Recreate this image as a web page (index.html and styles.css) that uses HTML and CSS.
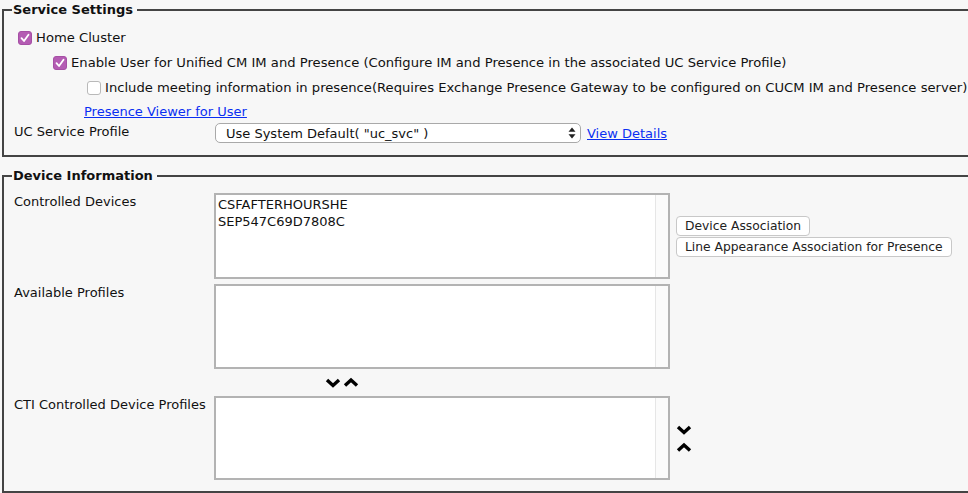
FILE: index.html
```html
<!DOCTYPE html>
<html>
<head>
<meta charset="utf-8">
<link rel="stylesheet" href="styles.css">
</head>
<body>
<fieldset class="fs fs-service">
  <legend class="lg">Service Settings</legend>
  <div class="content">
    <div class="row indent0">
      <span class="cb checked"><svg viewBox="0 0 14 14" width="14" height="14"><polyline points="3.5,7.2 6,10 10.5,3.8" fill="none" stroke="#fff" stroke-width="1.8" stroke-linecap="round" stroke-linejoin="round"/></svg></span>
      <span class="txt">Home Cluster</span>
    </div>
    <div class="row indent1">
      <span class="cb checked"><svg viewBox="0 0 14 14" width="14" height="14"><polyline points="3.5,7.2 6,10 10.5,3.8" fill="none" stroke="#fff" stroke-width="1.8" stroke-linecap="round" stroke-linejoin="round"/></svg></span>
      <span class="txt">Enable User for Unified CM IM and Presence (Configure IM and Presence in the associated UC Service Profile)</span>
    </div>
    <div class="row indent2">
      <span class="cb"></span>
      <span class="txt">Include meeting information in presence(Requires Exchange Presence Gateway to be configured on CUCM IM and Presence server)</span>
    </div>
    <div class="row linkrow">
      <a class="lnk" href="#">Presence Viewer for User</a>
    </div>
    <div class="row ucrow">
      <span class="lbl">UC Service Profile</span>
      <div class="selwrap">
        <select class="sel"><option>Use System Default( "uc_svc" )</option></select>
        <svg class="selarrows" viewBox="0 0 8 12" width="8" height="12"><polygon points="4,0.5 7.5,4.8 0.5,4.8" fill="#222"/><polygon points="4,11.5 7.5,7.2 0.5,7.2" fill="#222"/></svg>
      </div>
      <a class="lnk vd" href="#">View Details</a>
    </div>
  </div>
</fieldset>

<fieldset class="fs fs-device">
  <legend class="lg">Device Information</legend>
  <div class="grid">
    <div class="glbl">Controlled Devices</div>
    <div class="listbox lb1">
      <div class="items"><div>CSFAFTERHOURSHE</div><div>SEP547C69D7808C</div></div>
      <div class="track"></div>
    </div>
    <div class="btns">
      <button class="btn">Device Association</button>
      <button class="btn">Line Appearance Association for Presence</button>
    </div>

    <div class="glbl">Available Profiles</div>
    <div class="listbox lb2">
      <div class="items"></div>
      <div class="track"></div>
    </div>
    <div></div>

    <div></div>
    <div class="movers">
      <svg width="16" height="11" viewBox="0 0 16 11"><polyline points="2,3 8,8.5 14,3" fill="none" stroke="#000" stroke-width="3.4"/></svg>
      <svg width="16" height="11" viewBox="0 0 16 11"><polyline points="2,8.5 8,3 14,8.5" fill="none" stroke="#000" stroke-width="3.4"/></svg>
    </div>
    <div></div>

    <div class="glbl">CTI Controlled Device Profiles</div>
    <div class="listbox lb3">
      <div class="items"></div>
      <div class="track"></div>
    </div>
    <div class="vmovers">
      <svg width="16" height="11" viewBox="0 0 16 11"><polyline points="2,3 8,8.5 14,3" fill="none" stroke="#000" stroke-width="3.4"/></svg>
      <svg width="16" height="11" viewBox="0 0 16 11"><polyline points="2,8.5 8,3 14,8.5" fill="none" stroke="#000" stroke-width="3.4"/></svg>
    </div>
  </div>
</fieldset>
</body>
</html>
```
FILE: styles.css
```css
html, body {
  margin: 0;
  padding: 0;
  background: #f7f7f7;
  overflow: hidden;
}
body {
  font-family: "DejaVu Sans", Verdana, sans-serif;
  font-size: 13px;
  color: #111;
  width: 968px;
  height: 493px;
}
.fs {
  margin: 0 0 0 2px;
  width: 1000px;
  border: 2px solid #444;
  border-right: none;
  padding: 0 0 0 8px;
  box-sizing: border-box;
  min-width: 0;
}
.lg {
  font-weight: bold;
  font-size: 13px;
  line-height: 20px;
  padding: 0 4px 0 1px;
  color: #111;
}
.fs-service {
  padding-bottom: 11px;
}
.content {
  padding: 5px 0 0 2px;
}
.row {
  display: flex;
  align-items: center;
  height: 25px;
  white-space: nowrap;
}
.txt {
  font-size: 13.15px;
}
.indent0 { padding-left: 4px; }
.indent1 { padding-left: 39px; }
.indent2 { padding-left: 73px; }
.cb {
  width: 14px;
  height: 14px;
  border-radius: 3px;
  box-sizing: border-box;
  border: 1px solid #b9b9b9;
  background: #fff;
  margin-right: 4px;
  flex: none;
  display: inline-flex;
}
.cb.checked {
  background: #b45cb3;
  border-color: #a64fa5;
}
.cb svg { display: block; margin: -1px; }
.linkrow {
  height: 22px;
  padding-left: 70px;
}
.lnk {
  color: #0a2ff2;
  text-decoration: underline;
}
.ucrow {
  height: 22px;
}
.lbl {
  width: 200px;
  flex: none;
  margin-top: -3px;
}
.selwrap {
  position: relative;
  width: 366px;
  height: 20px;
  margin-left: 1px;
}
.sel {
  appearance: none;
  -webkit-appearance: none;
  width: 100%;
  height: 20px;
  border: 1px solid #a9a9a9;
  border-radius: 5px;
  background: #fff;
  font-family: "DejaVu Sans", Verdana, sans-serif;
  font-size: 13px;
  color: #111;
  padding: 0 0 0 10px;
  box-sizing: border-box;
  margin: 0;
}
.selarrows {
  position: absolute;
  right: 5px;
  top: 4px;
}
.vd {
  margin-left: 6px;
}
.fs-device {
  margin-top: 9px;
  padding-bottom: 6px;
}
.grid {
  display: grid;
  grid-template-columns: 200px 456px auto;
  padding: 7px 0 0 2px;
}
.glbl {
  padding-top: 1px;
  line-height: 15px;
}
.listbox {
  border: 2px solid #b3b3b3;
  background: #fff;
  display: flex;
  box-sizing: border-box;
  margin-bottom: 5px;
}
.lb1 { height: 86px; }
.lb2 { height: 85px; }
.lb3 { height: 84px; }
.items {
  flex: 1;
  padding: 1px 0 0 2px;
  line-height: 17px;
}
.track {
  width: 12px;
  border-left: 1px solid #e6e6e6;
  background: #fbfbfb;
}
.btns {
  display: flex;
  flex-direction: column;
  align-items: flex-start;
  justify-content: center;
  gap: 1px;
  padding: 0 0 5px 6px;
}
.btn {
  font-family: "DejaVu Sans", Verdana, sans-serif;
  font-size: 12.3px;
  color: #222;
  background: #fff;
  border: 1px solid #c8c8c8;
  border-radius: 4px;
  height: 20px;
  padding: 0 8px;
  margin: 0;
  line-height: 18px;
}
.movers {
  height: 27px;
  margin-top: -5px;
  padding-left: 111px;
  display: flex;
  align-items: center;
  gap: 2px;
}
.movers svg, .vmovers svg { display: block; }
.vmovers {
  display: flex;
  flex-direction: column;
  justify-content: center;
  gap: 7px;
  padding: 0 0 5px 6px;
}
```
